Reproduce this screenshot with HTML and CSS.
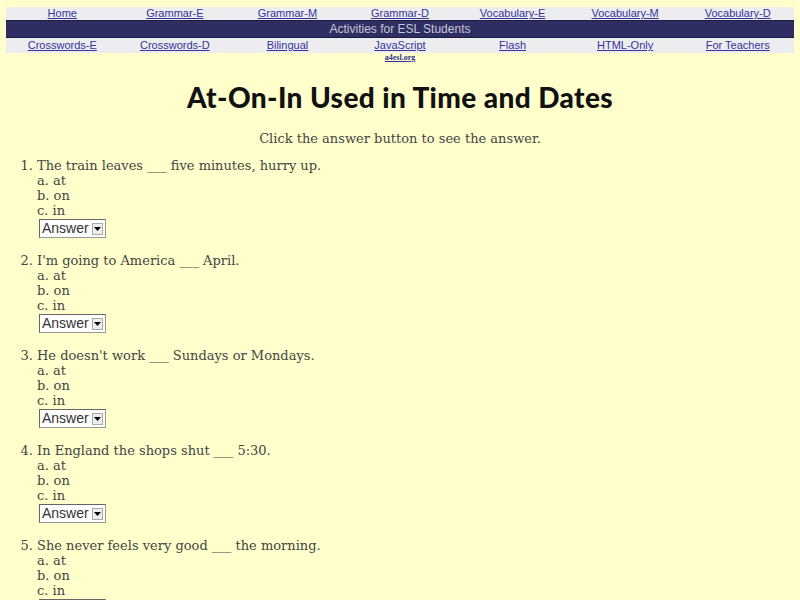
FILE: index.html
```html
<!DOCTYPE html>
<html>
<head>
<meta charset="utf-8">
<title>At-On-In Used in Time and Dates</title>
<link rel="stylesheet" href="styles.css">
</head>
<body>
<div class="nav">
  <div class="row">
    <a href="#">Home</a><a href="#">Grammar-E</a><a href="#">Grammar-M</a><a href="#">Grammar-D</a><a href="#">Vocabulary-E</a><a href="#">Vocabulary-M</a><a href="#">Vocabulary-D</a>
  </div>
  <div class="band">Activities for ESL Students</div>
  <div class="row">
    <a href="#">Crosswords-E</a><a href="#">Crosswords-D</a><a href="#">Bilingual</a><a href="#">JavaScript</a><a href="#">Flash</a><a href="#">HTML-Only</a><a href="#">For Teachers</a>
  </div>
  <div class="sub"><a href="#">a4esl.org</a></div>
</div>
<h1>At-On-In Used in Time and Dates</h1>
<p class="intro">Click the answer button to see the answer.</p>
<ol class="quiz">
  <li><div>The train leaves ___ five minutes, hurry up.</div><div>a. at</div><div>b. on</div><div>c. in</div><div class="sel"><span class="lbl">Answer</span><span class="arr"><svg width="7" height="4" viewBox="0 0 7 4"><path d="M0 0h7L3.5 4z" fill="#000"/></svg></span></div></li>
  <li><div>I'm going to America ___ April.</div><div>a. at</div><div>b. on</div><div>c. in</div><div class="sel"><span class="lbl">Answer</span><span class="arr"><svg width="7" height="4" viewBox="0 0 7 4"><path d="M0 0h7L3.5 4z" fill="#000"/></svg></span></div></li>
  <li><div>He doesn't work ___ Sundays or Mondays.</div><div>a. at</div><div>b. on</div><div>c. in</div><div class="sel"><span class="lbl">Answer</span><span class="arr"><svg width="7" height="4" viewBox="0 0 7 4"><path d="M0 0h7L3.5 4z" fill="#000"/></svg></span></div></li>
  <li><div>In England the shops shut ___ 5:30.</div><div>a. at</div><div>b. on</div><div>c. in</div><div class="sel"><span class="lbl">Answer</span><span class="arr"><svg width="7" height="4" viewBox="0 0 7 4"><path d="M0 0h7L3.5 4z" fill="#000"/></svg></span></div></li>
  <li><div>She never feels very good ___ the morning.</div><div>a. at</div><div>b. on</div><div>c. in</div><div class="sel"><span class="lbl">Answer</span><span class="arr"><svg width="7" height="4" viewBox="0 0 7 4"><path d="M0 0h7L3.5 4z" fill="#000"/></svg></span></div></li>
</ol>
</body>
</html>
```
FILE: styles.css
```css
html, body {
  background: #ffffcc;
}
body {
  margin: 0;
  padding: 7px 6px 0;
  font-family: "DejaVu Serif", serif;
  color: #444;
}
.nav {
  font-family: "Liberation Sans", Arial, sans-serif;
  font-size: 11px;
}
.row {
  display: grid;
  grid-template-columns: repeat(7, 1fr);
  background: #ededf0;
  height: 13px;
  line-height: 13px;
  text-align: center;
}
.row + .band + .row {
  height: 15px;
  line-height: 15px;
}
.row a, .sub a {
  color: #333399;
  text-decoration: underline;
}
.band {
  background: #2e2e62;
  border-top: 1px solid #1c1c40;
  border-bottom: 1px solid #1c1c40;
  height: 16px;
  line-height: 16px;
  color: #c8c8d8;
  font-size: 12px;
  text-align: center;
}
.sub {
  text-align: center;
  font-size: 8px;
  line-height: 10px;
  font-family: "Liberation Serif", serif;
  font-weight: bold;
}
h1 {
  margin: 16px 0 0;
  text-align: center;
  font-family: "Lato", sans-serif;
  font-weight: 900;
  font-size: 28px;
  letter-spacing: 0.4px;
  line-height: 36px;
  color: #111;
}
.intro {
  margin: 16px 0 0;
  text-align: center;
  font-size: 13px;
  line-height: 15px;
}
.quiz {
  margin: 12px 0 0;
  padding-left: 31px;
  font-size: 13px;
  line-height: 15px;
}
.quiz li {
  margin-bottom: 15px;
}
.sel {
  display: flex;
  align-items: center;
  width: 67px;
  height: 19px;
  margin: 1px 0 0 2px;
  background: #fff;
  border: 1px solid #999;
  border-left-color: #666;
  border-top-color: #666;
  box-sizing: border-box;
  font-family: "Liberation Sans", Arial, sans-serif;
  font-size: 14px;
  color: #333;
}
.lbl {
  flex: 1;
  padding-left: 2px;
}
.arr {
  width: 11px;
  height: 12px;
  margin-right: 2px;
  background: #eee;
  border: 1px solid #aaa;
  box-sizing: border-box;
  display: flex;
  align-items: center;
  justify-content: center;
}
.arr svg {
  display: block;
}
```
